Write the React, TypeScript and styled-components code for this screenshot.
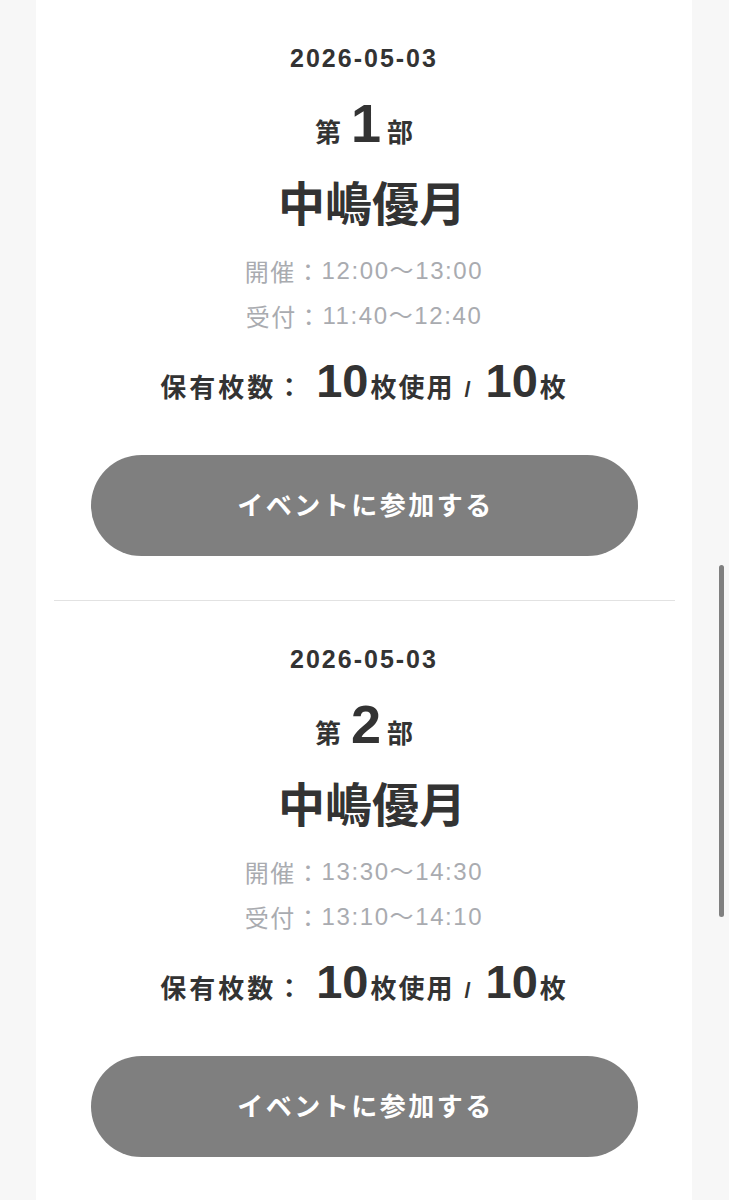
import React from "react";
import styled, { createGlobalStyle } from "styled-components";

const GlobalStyle = createGlobalStyle`
  html, body {
    margin: 0;
    padding: 0;
    background-color: #f7f7f7;
  }
  body {
    font-family: "Liberation Sans", "Noto Sans CJK JP", sans-serif;
    color: #333;
  }
`;

type Session = {
  date: string;
  part: number;
  name: string;
  open: string;
  reception: string;
  used: number;
  total: number;
};

const sessions: Session[] = [
  {
    date: "2026-05-03",
    part: 1,
    name: "中嶋優月",
    open: "12:00〜13:00",
    reception: "11:40〜12:40",
    used: 10,
    total: 10,
  },
  {
    date: "2026-05-03",
    part: 2,
    name: "中嶋優月",
    open: "13:30〜14:30",
    reception: "13:10〜14:10",
    used: 10,
    total: 10,
  },
];

export default function App() {
  return (
    <>
      <GlobalStyle />
      <Page>
        <Card>
          {sessions.map((s, i) => (
            <Section key={s.part}>
              <DateRow>{s.date}</DateRow>
              <PartRow>
                <PartLabel>第</PartLabel>
                <PartNumber>{s.part}</PartNumber>
                <PartLabel>部</PartLabel>
              </PartRow>
              <Name>{s.name}</Name>
              <Times>
                <TimeRow>
                  <TimeLabel>開催：</TimeLabel>
                  {s.open}
                </TimeRow>
                <TimeRow>
                  <TimeLabel>受付：</TimeLabel>
                  {s.reception}
                </TimeRow>
              </Times>
              <CountRow>
                <CountLabel>保有枚数：</CountLabel>
                <CountNumber>{s.used}</CountNumber>
                <CountUnit>枚使用</CountUnit>
                <Slash>/</Slash>
                <CountNumber>{s.total}</CountNumber>
                <CountUnit>枚</CountUnit>
              </CountRow>
              <JoinButton type="button">イベントに参加する</JoinButton>
              <Divider $hidden={i === sessions.length - 1} />
            </Section>
          ))}
        </Card>
      </Page>
      <ScrollThumb />
    </>
  );
}

const Page = styled.div`
  width: 100%;
  min-height: 1200px;
  padding: 0 37px 0 36px;
  box-sizing: border-box;
`;

const Card = styled.div`
  background-color: #fff;
  min-height: 1200px;
`;

const Section = styled.div`
  display: flex;
  flex-direction: column;
  align-items: center;
  padding-top: 43px;
`;

const DateRow = styled.div`
  height: 30px;
  display: flex;
  align-items: center;
  font-size: 25px;
  line-height: 1;
  font-weight: 700;
  letter-spacing: 2px;
  color: #333;
`;

const PartRow = styled.div`
  margin-top: 23px;
  font-size: 26px;
  line-height: 1;
  text-align: center;
  color: #333;
`;

const PartLabel = styled.span`
  font-family: "Noto Sans CJK JP", sans-serif;
  font-size: 26px;
  font-weight: 700;
`;

const PartNumber = styled.span`
  font-size: 54px;
  font-weight: 700;
  margin: 0 6px 0 10px;
`;

const Name = styled.div`
  margin-top: 27px;
  padding-left: 16px;
  font-family: "Noto Sans CJK JP", sans-serif;
  font-size: 47px;
  line-height: 47px;
  font-weight: 700;
  color: #333;
`;

const Times = styled.div`
  margin-top: 24px;
  display: flex;
  flex-direction: column;
  align-items: center;
`;

const TimeRow = styled.div`
  height: 45px;
  display: flex;
  align-items: center;
  font-size: 24px;
  line-height: 1;
  letter-spacing: 1.6px;
  color: #a9abb0;
`;

const TimeLabel = styled.span`
  font-family: "Noto Sans CJK JP", sans-serif;
`;

const CountRow = styled.div`
  margin-top: 19px;
  font-size: 26px;
  line-height: 1;
  text-align: center;
  white-space: nowrap;
  color: #333;
`;

const CountLabel = styled.span`
  font-family: "Noto Sans CJK JP", sans-serif;
  font-size: 26px;
  font-weight: 700;
  letter-spacing: 3px;
  margin-right: 11px;
`;

const CountNumber = styled.span`
  font-size: 47px;
  font-weight: 700;
`;

const CountUnit = styled.span`
  font-family: "Noto Sans CJK JP", sans-serif;
  font-size: 26px;
  font-weight: 700;
  letter-spacing: 2px;
  margin-left: 2px;
`;

const Slash = styled.span`
  font-size: 22px;
  font-weight: 700;
  margin: 0 15px 0 10px;
`;

const JoinButton = styled.button`
  align-self: stretch;
  margin: 51px 54px 0 55px;
  height: 101px;
  border: none;
  border-radius: 51px;
  background-color: #7f7f7f;
  color: #fff;
  font-family: "Noto Sans CJK JP", sans-serif;
  font-size: 26px;
  font-weight: 700;
  letter-spacing: 2.5px;
  padding: 0 0 4px 2px;
  cursor: pointer;
`;

const Divider = styled.div<{ $hidden?: boolean }>`
  align-self: stretch;
  margin: 44px 17px 0 18px;
  height: 1px;
  background-color: ${(p) => (p.$hidden ? "transparent" : "#e2e2e2")};
`;

const ScrollThumb = styled.div`
  position: fixed;
  top: 565px;
  right: 5px;
  width: 5px;
  height: 352px;
  border-radius: 3px;
  background-color: #808080;
`;
